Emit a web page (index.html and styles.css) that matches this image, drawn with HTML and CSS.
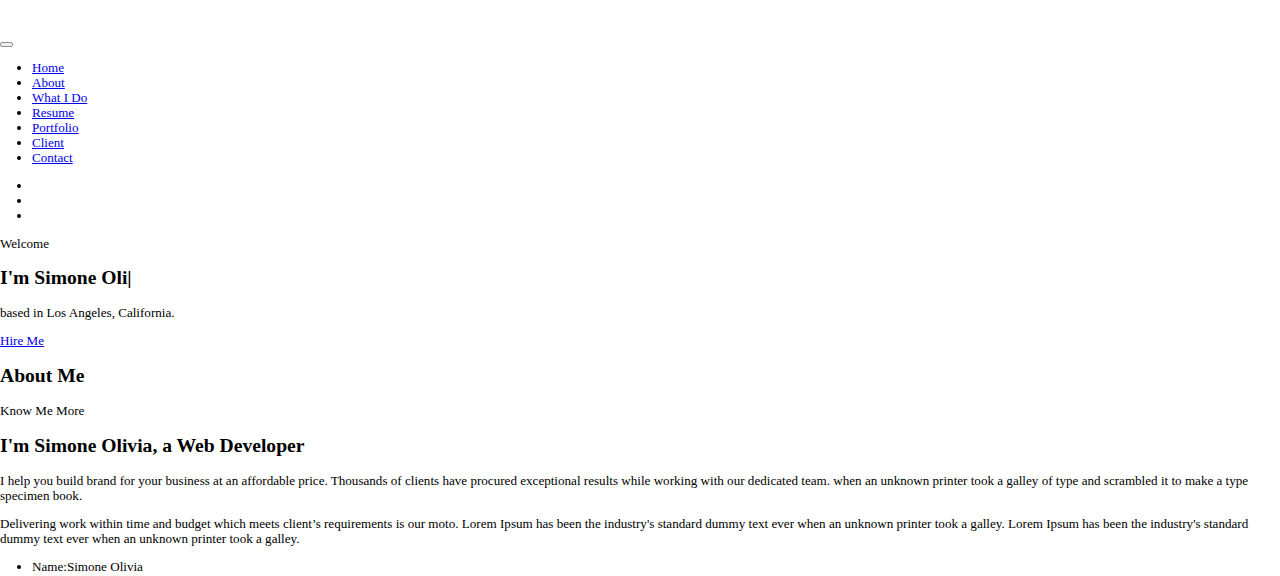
FILE: index.html
```html
<!DOCTYPE html>
<html lang="en">
<head>
<meta charset="utf-8">
<title>Simone Olivia</title>
<link rel="stylesheet" href="styles.css">
</head>
<body>
<header class="site-header">
  <button class="toggle" type="button"></button>
  <ul class="menu">
    <li><a href="#home">Home</a></li>
    <li><a href="#about">About</a></li>
    <li><a href="#services">What I Do</a></li>
    <li><a href="#resume">Resume</a></li>
    <li><a href="#portfolio">Portfolio</a></li>
    <li><a href="#client">Client</a></li>
    <li><a href="#contact">Contact</a></li>
  </ul>
  <ul class="menu social">
    <li></li>
    <li></li>
    <li></li>
  </ul>
</header>
<section class="hero">
  <p>Welcome</p>
  <h2>I'm Simone Oli|</h2>
  <p>based in Los Angeles, California.</p>
  <p><a href="#contact">Hire Me</a></p>
</section>
<section class="about">
  <h2>About Me</h2>
  <p>Know Me More</p>
  <h2>I'm Simone Olivia, a Web Developer</h2>
  <p>I help you build brand for your business at an affordable price. Thousands of clients have procured exceptional results while working with our dedicated team. when an unknown printer took a galley of type and scrambled it to make a type specimen book.</p>
  <p>Delivering work within time and budget which meets client’s requirements is our moto. Lorem Ipsum has been the industry's standard dummy text ever when an unknown printer took a galley. Lorem Ipsum has been the industry's standard dummy text ever when an unknown printer took a galley.</p>
  <ul class="menu">
    <li>Name:Simone Olivia</li>
    <li>Email:chat@simone.com</li>
  </ul>
</section>
</body>
</html>
```

FILE: styles.css
```css
html, body {
  margin: 0;
  padding: 0;
  background: #ffffff;
}
body {
  font-family: "Liberation Serif", "Times New Roman", serif;
  font-size: 13.1px;
  line-height: 15px;
  color: #000000;
}
a {
  color: #0000ee;
}
.site-header {
  padding-top: 42px;
}
.toggle {
  display: block;
  width: 13px;
  height: 5px;
  padding: 0;
  margin: 0;
  border: 1px solid #8f8f8f;
  border-radius: 2px;
  background: #efefef;
}
.menu {
  margin: 13px 0;
  padding-left: 32px;
}
p {
  margin: 13px 0;
}
h2 {
  font-size: 19.6px;
  line-height: 22px;
  margin: 16px 0;
}
.about h2 {
  margin: 16.5px 0;
}
```
